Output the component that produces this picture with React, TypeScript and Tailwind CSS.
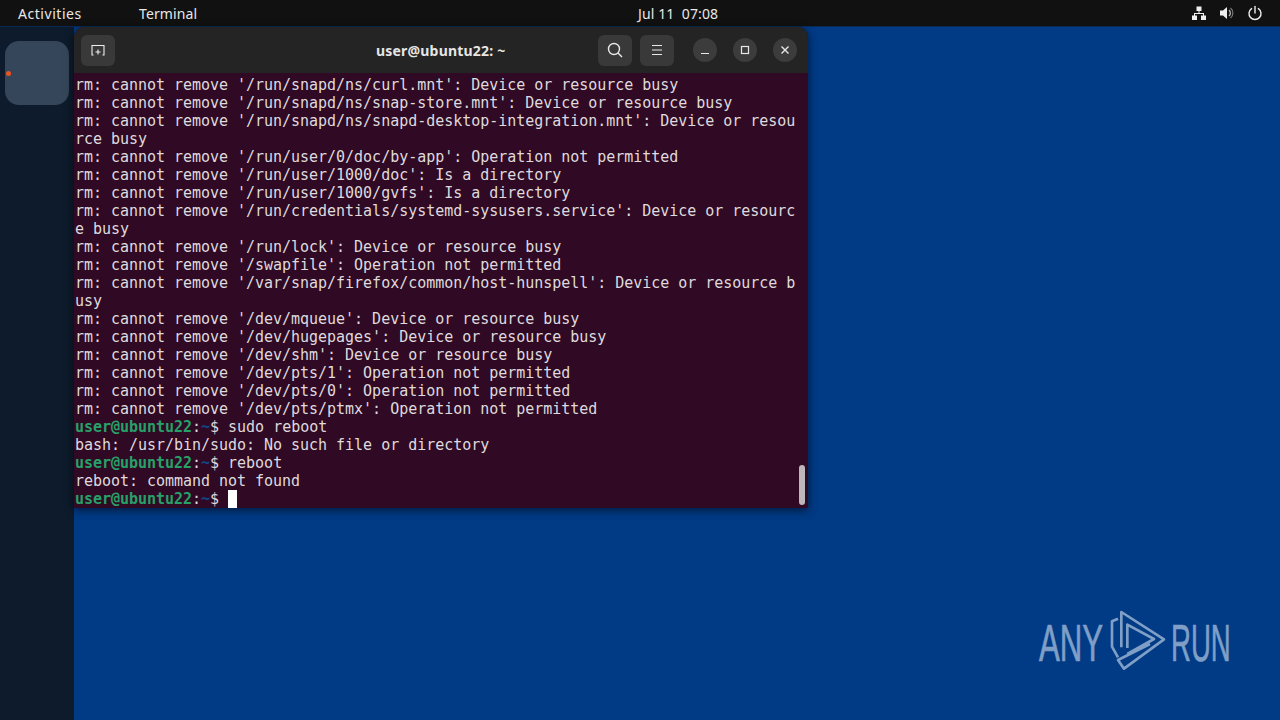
import React from 'react';

const lines: string[] = [
  "rm: cannot remove '/run/snapd/ns/curl.mnt': Device or resource busy",
  "rm: cannot remove '/run/snapd/ns/snap-store.mnt': Device or resource busy",
  "rm: cannot remove '/run/snapd/ns/snapd-desktop-integration.mnt': Device or resou",
  'rce busy',
  "rm: cannot remove '/run/user/0/doc/by-app': Operation not permitted",
  "rm: cannot remove '/run/user/1000/doc': Is a directory",
  "rm: cannot remove '/run/user/1000/gvfs': Is a directory",
  "rm: cannot remove '/run/credentials/systemd-sysusers.service': Device or resourc",
  'e busy',
  "rm: cannot remove '/run/lock': Device or resource busy",
  "rm: cannot remove '/swapfile': Operation not permitted",
  "rm: cannot remove '/var/snap/firefox/common/host-hunspell': Device or resource b",
  'usy',
  "rm: cannot remove '/dev/mqueue': Device or resource busy",
  "rm: cannot remove '/dev/hugepages': Device or resource busy",
  "rm: cannot remove '/dev/shm': Device or resource busy",
  "rm: cannot remove '/dev/pts/1': Operation not permitted",
  "rm: cannot remove '/dev/pts/0': Operation not permitted",
  "rm: cannot remove '/dev/pts/ptmx': Operation not permitted",
];

const Prompt = ({ children }: { children?: React.ReactNode }) => (
  <div className="h-[18px] whitespace-pre">
    <span className="font-bold text-[#26a269]">user@ubuntu22</span>
    <span>:</span>
    <span className="font-bold text-[#12488b]">~</span>
    <span>$ </span>
    {children}
  </div>
);

const HeaderButton = ({ children }: { children: React.ReactNode }) => (
  <div className="flex h-[31px] w-[34px] items-center justify-center rounded-[6px] bg-[#393939]">{children}</div>
);

const RoundButton = ({ children }: { children: React.ReactNode }) => (
  <div className="flex h-[24px] w-[24px] items-center justify-center rounded-full bg-[#3c3c3c]">{children}</div>
);

export default function App() {
  return (
    <div className="flex h-[720px] w-[1280px] flex-col overflow-hidden bg-[#013a85] font-['Noto_Sans',sans-serif]">
      {/* top bar */}
      <div className="relative flex h-[27px] shrink-0 items-center border-b border-[#0a2a55] bg-[#111111] text-[14px] text-[#e8e8e8]">
        <span className="ml-[18px] w-[121px] tracking-[0.55px]">Activities</span>
        <span className="tracking-[0.12px]">Terminal</span>
        <span className="absolute left-[638px] whitespace-pre tracking-[0.1px]">Jul 11  07:08</span>
        <div className="ml-auto mr-[17px] flex items-center gap-[12px]">
          <svg width="16" height="16" viewBox="0 0 16 16" fill="#eeeeee">
            <rect x="5.5" y="1.5" width="5" height="4.5" />
            <rect x="1" y="10.5" width="5" height="4.5" />
            <rect x="10" y="10.5" width="5" height="4.5" />
            <path d="M7.5 6h1v2H13v3h-1V9H4v2H3V8h4.5z" />
          </svg>
          <svg width="16" height="16" viewBox="0 0 16 16" fill="none">
            <path d="M1 5.5h3L8 2v12l-4-3.5H1z" fill="#eeeeee" />
            <path d="M10 5a4 4 0 0 1 0 6" stroke="#bbbbbb" strokeWidth="1.3" />
            <path d="M11.5 3a6.5 6.5 0 0 1 0 10" stroke="#777777" strokeWidth="1.2" />
          </svg>
          <svg width="16" height="16" viewBox="0 0 16 16" fill="none" stroke="#eeeeee" strokeWidth="1.4" strokeLinecap="round">
            <path d="M8 1.5v6.5" />
            <path d="M4.6 3.6a6 6 0 1 0 6.8 0" />
          </svg>
        </div>
      </div>

      <div className="flex flex-1">
        {/* dock */}
        <div className="relative flex w-[74px] shrink-0 justify-center bg-[#0d1b2c] pt-[14px]">
          <div className="h-[64px] w-[64px] rounded-[14px] bg-[#36465a]" />
          <div className="absolute left-[6px] top-[44px] h-[5px] w-[5px] rounded-full bg-[#e95420]" />
        </div>

        <div className="relative flex-1">
          {/* terminal window */}
          <div className="flex h-[481px] w-[734px] flex-col overflow-hidden rounded-t-[10px] bg-[#300a24] shadow-[0_2px_10px_rgba(0,0,0,0.6)]">
            <div className="relative flex h-[46px] shrink-0 items-center bg-[#242424] pl-[7px] pr-[8px]">
              <HeaderButton>
                <svg width="16" height="16" viewBox="0 0 16 16" fill="none" stroke="#f0f0f0" strokeWidth="1.1">
                  <path d="M3.5 13H2V3.5h12V13h-1.5" />
                  <path d="M8 7.5v5M5.5 10h5" />
                </svg>
              </HeaderButton>
              <span className="absolute left-[302px] text-[14px] font-bold tracking-[0.2px] text-[#e6e6e6]">user@ubuntu22: ~</span>
              <div className="ml-auto flex items-center">
                <HeaderButton>
                  <svg width="18" height="18" viewBox="0 0 18 18" fill="none" stroke="#e8e8e8" strokeWidth="1.4">
                    <circle cx="8" cy="8" r="5.5" />
                    <path d="M12 12l4 4" />
                  </svg>
                </HeaderButton>
                <div className="ml-[8px]">
                  <HeaderButton>
                    <svg width="16" height="16" viewBox="0 0 16 16" fill="none" stroke="#e8e8e8" strokeWidth="1.1">
                      <path d="M3 3.5h10M3 8h10M3 12.5h10" />
                    </svg>
                  </HeaderButton>
                </div>
                <div className="ml-[19px] flex gap-[16px] pr-[3px]">
                  <RoundButton>
                    <svg width="10" height="10" viewBox="0 0 10 10" stroke="#e8e8e8" strokeWidth="1.2">
                      <path d="M1 8.5h8" />
                    </svg>
                  </RoundButton>
                  <RoundButton>
                    <svg width="10" height="10" viewBox="0 0 10 10" fill="none" stroke="#e8e8e8" strokeWidth="1.2">
                      <rect x="1.5" y="1.5" width="7" height="7" />
                    </svg>
                  </RoundButton>
                  <RoundButton>
                    <svg width="10" height="10" viewBox="0 0 10 10" stroke="#e8e8e8" strokeWidth="1.4">
                      <path d="M1.5 1.5l7 7M8.5 1.5l-7 7" />
                    </svg>
                  </RoundButton>
                </div>
              </div>
            </div>

            <div className="relative flex-1 pl-[1px] pt-[3px] font-['DejaVu_Sans_Mono',monospace] text-[15px] leading-[18px] tracking-[-0.027px] text-[#dfdadd]">
              {lines.map((l, i) => (
                <div key={i} className="h-[18px] whitespace-pre">{l}</div>
              ))}
              <Prompt>sudo reboot</Prompt>
              <div className="h-[18px] whitespace-pre">bash: /usr/bin/sudo: No such file or directory</div>
              <Prompt>reboot</Prompt>
              <div className="h-[18px] whitespace-pre">reboot: command not found</div>
              <Prompt>
                <span className="inline-block h-[18px] w-[9px] bg-white align-top" />
              </Prompt>
              {/* scrollbar */}
              <div className="absolute right-[3px] top-[392px] h-[40px] w-[6px] rounded-full bg-[#bdb6ba]" />
            </div>
          </div>

          {/* watermark */}
          <span className="absolute left-[965px] top-[590px] origin-left scale-x-[0.6] text-[52px] leading-none text-[#7f9fc6] [-webkit-text-stroke:0.7px_#7f9fc6] font-['Liberation_Sans',sans-serif]">ANY</span>
          <svg className="absolute left-[1026px] top-[577px]" width="78" height="72" viewBox="0 0 234 216" fill="none" stroke="#7f9fc6" strokeWidth="8" strokeLinejoin="round">
            <path d="M54 44L36 52V128L54 160" />
            <path d="M64 130V24L192 106L72 194L54 168L150 120" />
            <path d="M82 132V62L162 105L82 150" />
          </svg>
          <span className="absolute left-[1097px] top-[590px] origin-left scale-x-[0.53] text-[52px] leading-none text-[#7f9fc6] [-webkit-text-stroke:0.7px_#7f9fc6] font-['Liberation_Sans',sans-serif]">RUN</span>
        </div>
      </div>
    </div>
  );
}
